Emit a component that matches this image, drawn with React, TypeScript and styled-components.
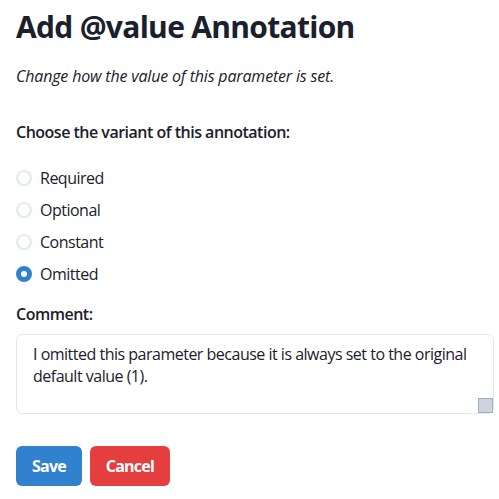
import React, { useState } from "react";
import styled, { createGlobalStyle } from "styled-components";

const Global = createGlobalStyle`
  html, body { margin: 0; padding: 0; background: #ffffff; }
  body { font-family: "Open Sans", "Noto Sans", sans-serif; color: #1a202c; }
  * { box-sizing: border-box; }
`;

const Page = styled.div`
  display: flex;
  flex-direction: column;
  padding: 9px 5px 0 16px;
  width: 499px;
`;

const Title = styled.h1`
  margin: 0;
  font-size: 30px;
  line-height: 36px;
  font-weight: 700;
  letter-spacing: -0.7px;
  color: #1a202c;
`;

const Subtitle = styled.p`
  margin: 19px 0 0;
  font-size: 16px;
  line-height: 24px;
  font-style: italic;
  letter-spacing: -0.17px;
`;

const Fieldset = styled.div`
  display: flex;
  flex-direction: column;
  margin-top: 32px;
`;

const Label = styled.div`
  font-size: 16px;
  line-height: 24px;
  font-weight: 600;
  letter-spacing: -0.5px;
`;

const RadioList = styled.div`
  display: flex;
  flex-direction: column;
  gap: 8px;
  margin-top: 22px;
`;

const RadioRow = styled.label`
  display: flex;
  align-items: center;
  gap: 8px;
  height: 24px;
  font-size: 16px;
  letter-spacing: -0.5px;
  cursor: pointer;
`;

const RadioCircle = styled.span<{ $checked: boolean }>`
  width: 16px;
  height: 16px;
  border-radius: 50%;
  flex: none;
  border: 2px solid ${(p) => (p.$checked ? "#3182ce" : "#e2e8f0")};
  background: ${(p) => (p.$checked ? "#3182ce" : "#ffffff")};
  display: flex;
  align-items: center;
  justify-content: center;
  &::after {
    content: "";
    display: ${(p) => (p.$checked ? "block" : "none")};
    width: 6px;
    height: 6px;
    border-radius: 50%;
    background: #ffffff;
  }
`;

const CommentLabel = styled(Label)`
  margin-top: 16px;
`;

const TextArea = styled.textarea`
  margin-top: 8px;
  width: 478px;
  height: 80px;
  padding: 8px 16px;
  border: 1px solid #e2e8f0;
  border-radius: 6px;
  font-family: inherit;
  font-size: 16px;
  line-height: 22px;
  letter-spacing: -0.5px;
  color: #1a202c;
  resize: vertical;
  outline: none;
  &::-webkit-resizer {
    background: #cbd5e0;
    border: 1px solid #a0aec0;
  }
`;

const Actions = styled.div`
  display: flex;
  gap: 8px;
  margin-top: 32px;
`;

const Button = styled.button<{ $tone: "blue" | "red" }>`
  height: 40px;
  padding: 0 16px;
  border: none;
  border-radius: 6px;
  font-family: inherit;
  font-size: 16px;
  font-weight: 700;
  letter-spacing: -0.8px;
  color: #ffffff;
  background: ${(p) => (p.$tone === "blue" ? "#3182ce" : "#e53e3e")};
  cursor: pointer;
`;

const options = ["Required", "Optional", "Constant", "Omitted"];

export default function App() {
  const [choice, setChoice] = useState("Omitted");
  const [comment, setComment] = useState(
    "I omitted this parameter because it is always set to the original default value (1)."
  );
  return (
    <Page>
      <Global />
      <Title>Add @value Annotation</Title>
      <Subtitle>Change how the value of this parameter is set.</Subtitle>
      <Fieldset>
        <Label>Choose the variant of this annotation:</Label>
        <RadioList>
          {options.map((o) => (
            <RadioRow key={o} onClick={() => setChoice(o)}>
              <RadioCircle $checked={choice === o} />
              {o}
            </RadioRow>
          ))}
        </RadioList>
      </Fieldset>
      <CommentLabel>Comment:</CommentLabel>
      <TextArea value={comment} onChange={(e) => setComment(e.target.value)} />
      <Actions>
        <Button $tone="blue">Save</Button>
        <Button $tone="red">Cancel</Button>
      </Actions>
    </Page>
  );
}
